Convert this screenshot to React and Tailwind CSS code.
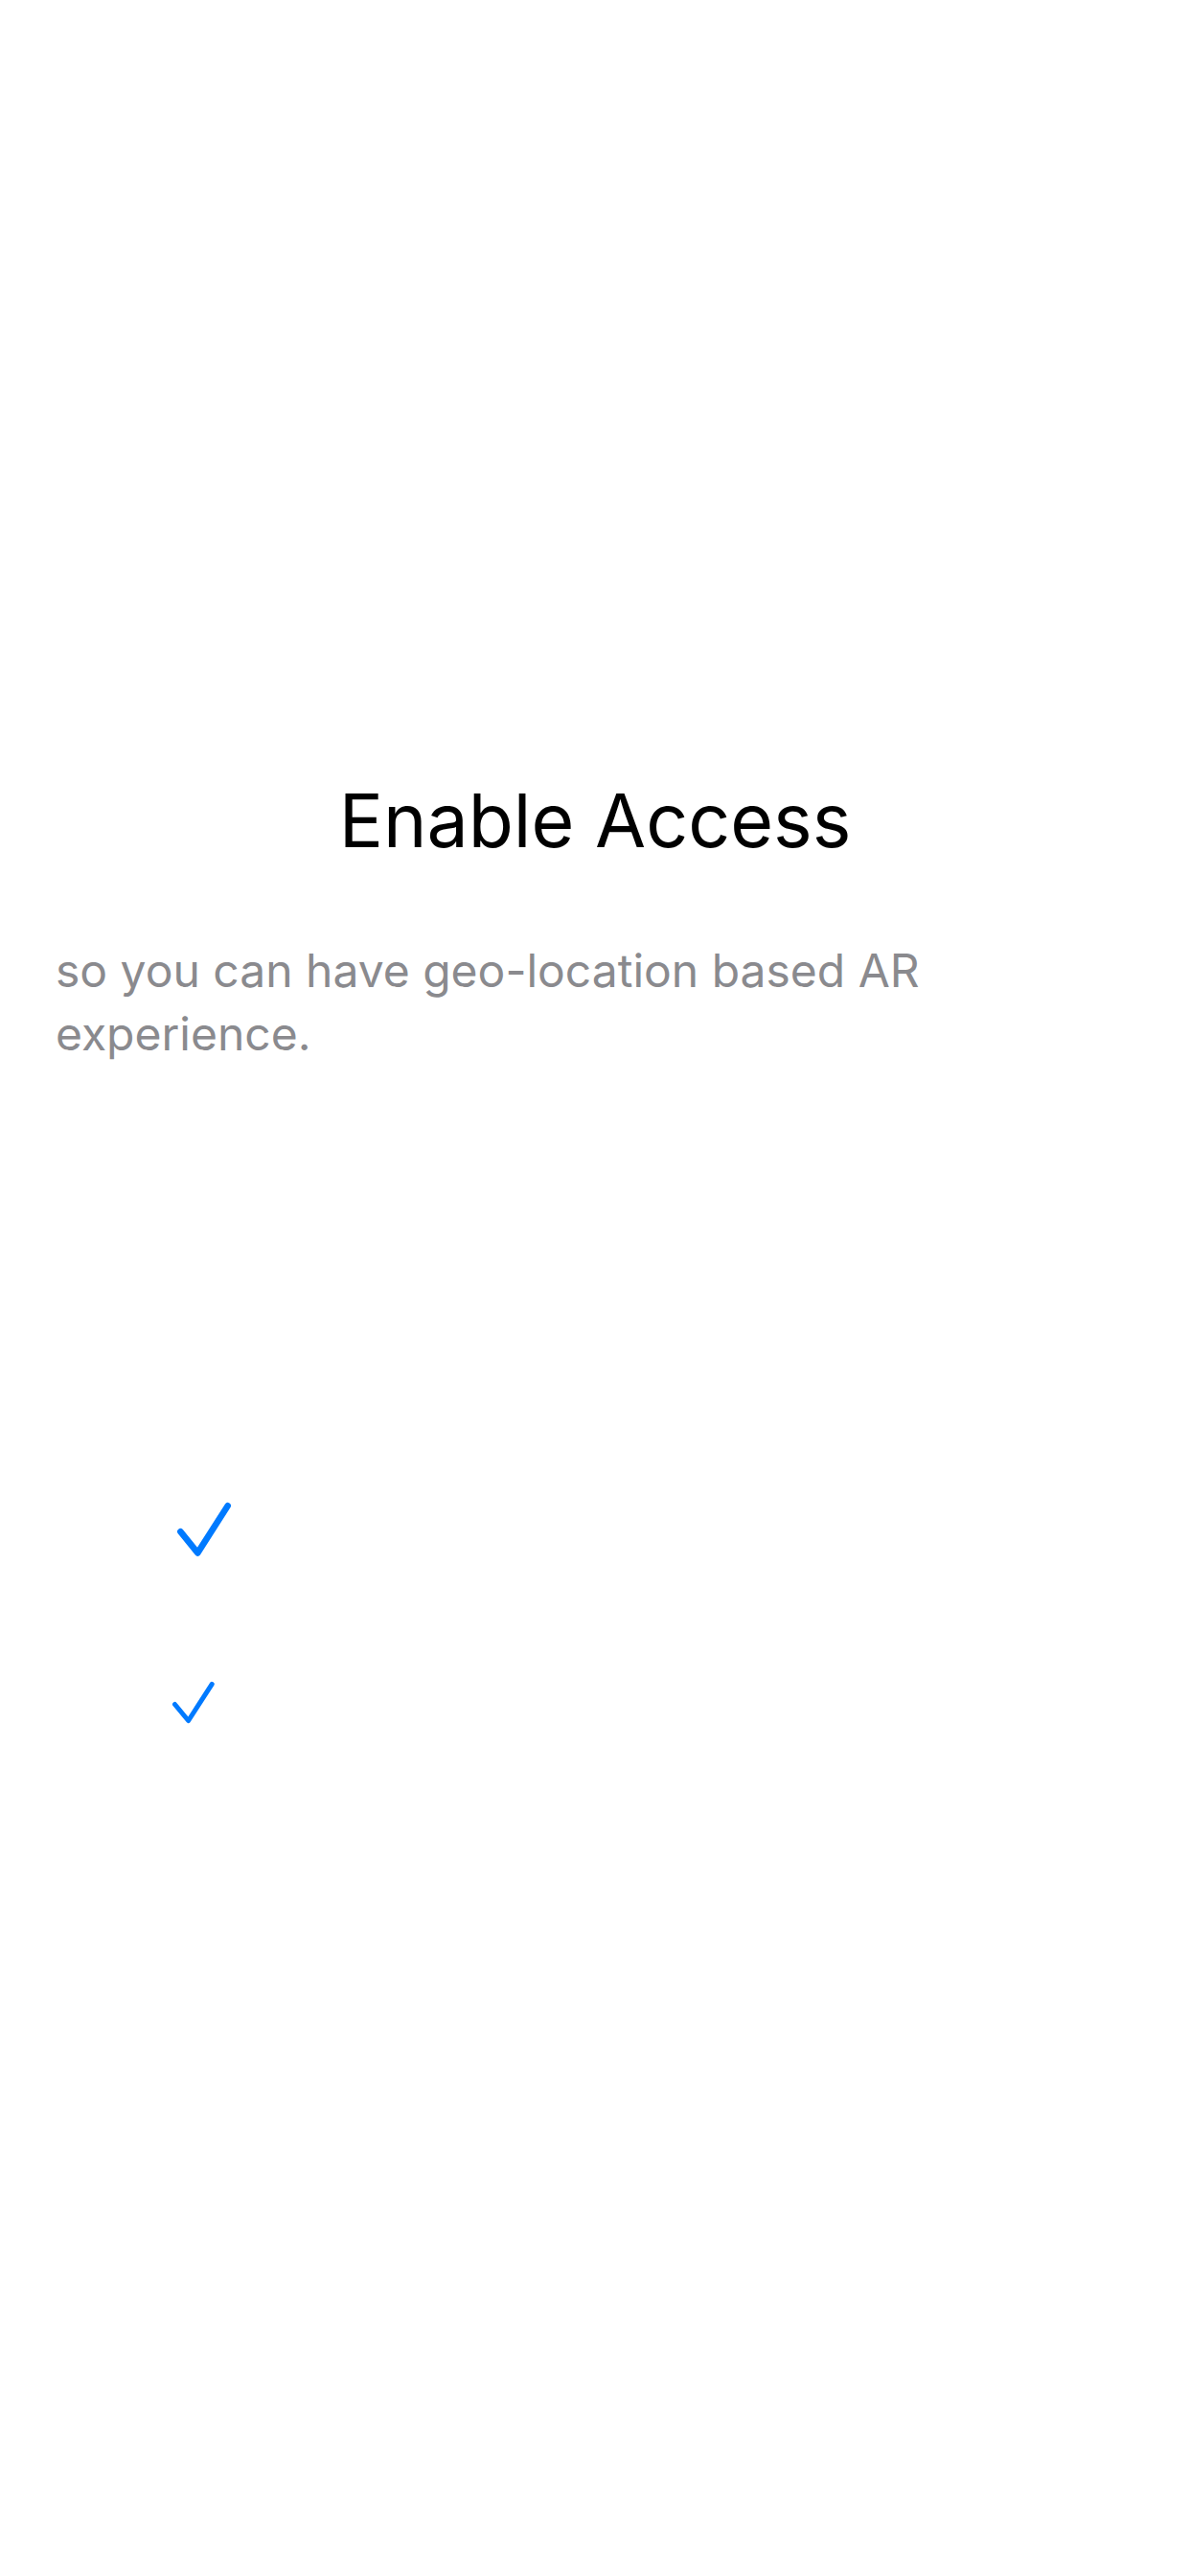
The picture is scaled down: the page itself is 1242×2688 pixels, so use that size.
export default function App() {
  return (
    <main className="flex min-h-screen flex-col bg-white px-[58px] pt-[800px] font-['Inter',sans-serif]">
      <h1 className="text-center text-[77px] leading-[112px] text-black">Enable Access</h1>
      <p className="mt-[68px] text-[48px] leading-[66px] text-[#8a8a8e]">so you can have geo-location based AR experience.</p>
      <ul className="mt-[454px] flex flex-col pl-[120px] text-[#007aff]">
        <li className="pl-[6px]">
          <svg role="img" className="h-[60px] w-[60px]" viewBox="0 0 60 60" fill="none" stroke="currentColor" strokeWidth="6.6" strokeLinecap="round" strokeLinejoin="round" aria-label="Granted">
            <path d="M4.3 32.2 L22.3 54.4 L53.7 5.3" />
          </svg>
        </li>
        <li className="mt-[126px]">
          <svg role="img" className="h-[48px] w-[48px]" viewBox="0 0 48 48" fill="none" stroke="currentColor" strokeWidth="5" strokeLinecap="round" strokeLinejoin="round" aria-label="Granted">
            <path d="M4.5 26.5 L18.6 43.5 L43.2 5.3" />
          </svg>
        </li>
      </ul>
    </main>
  );
}
